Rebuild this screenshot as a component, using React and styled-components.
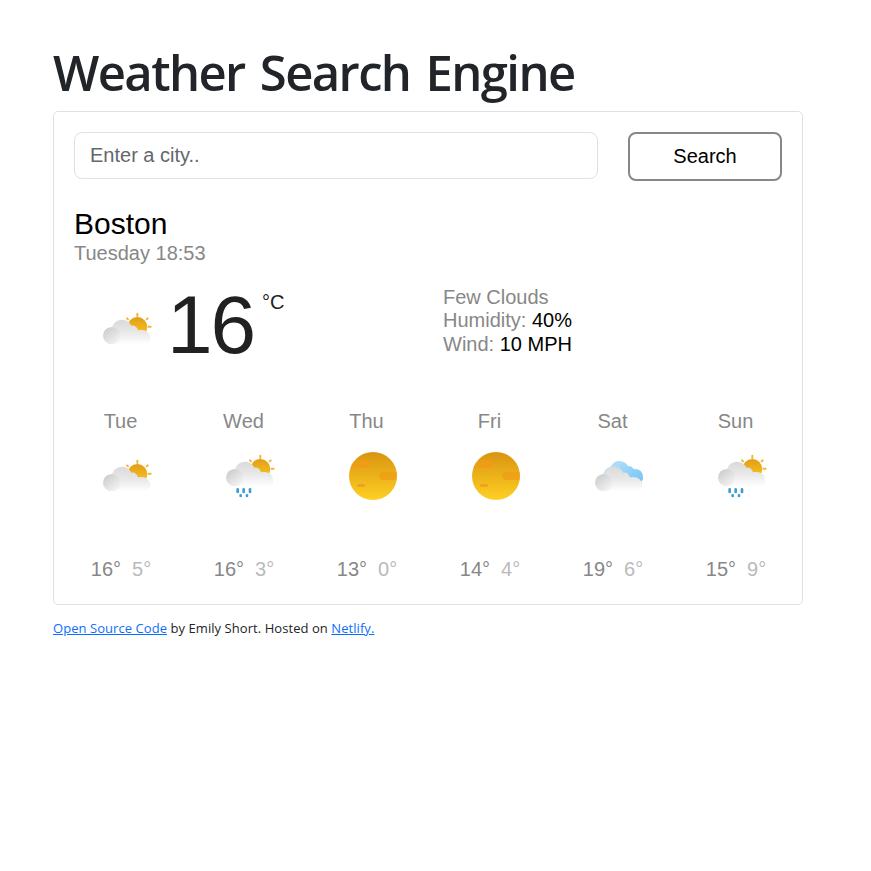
import React from "react";
import styled, { createGlobalStyle } from "styled-components";

const GlobalStyle = createGlobalStyle`
  *, *::before, *::after { box-sizing: border-box; }
  body {
    margin: 0;
    background: #fff;
    color: #212529;
    font-family: "Open Sans", "Noto Sans", sans-serif;
  }
`;

const Page = styled.main`
  width: 750px;
  margin: 43px 0 0 53px;
`;

const Title = styled.h1`
  margin: 0 0 8px;
  height: 60px;
  font-size: 49px;
  font-weight: 560;
  line-height: 59px;
  letter-spacing: -1.6px;
  word-spacing: 4px;
  white-space: nowrap;
`;

const Card = styled.section`
  height: 494px;
  padding: 20px;
  border: 1px solid #dee2e6;
  border-radius: 5px;
  font-family: "Liberation Sans", Arial, sans-serif;
  font-size: 20px;
  line-height: 23.5px;
  color: #878787;
`;

const SearchForm = styled.form`
  display: grid;
  grid-template-columns: 524px 154px;
  justify-content: space-between;
  align-items: start;
`;

const CityInput = styled.input`
  height: 47px;
  padding: 0 15px 1px;
  border: 1px solid #dee2e6;
  border-radius: 8px;
  background: #fff;
  font: inherit;
  outline: none;
  &::placeholder { color: #62676b; opacity: 1; }
`;

const SearchButton = styled.button`
  height: 49px;
  padding: 0;
  border: 2px solid #878787;
  border-radius: 8px;
  background: #fff;
  color: #000;
  font: inherit;
`;

const City = styled.h2`
  margin: 25px 0 0;
  font-size: 30px;
  font-weight: 400;
  line-height: 35px;
  color: #000;
`;

const Updated = styled.div`
  margin-top: 1px;
`;

const Current = styled.div`
  display: grid;
  grid-template-columns: 369px 1fr;
  height: 106px;
  margin-top: 10px;
`;

const Reading = styled.div`
  display: flex;
  color: #212121;
`;

const Temperature = styled.span`
  width: 95px;
  margin-left: -13px;
  font-size: 82px;
  line-height: 97px;
  letter-spacing: -2px;
`;

const Unit = styled.span`
  margin-top: 15px;
`;

const Details = styled.ul`
  margin: 10px 0 0;
  padding: 0;
  list-style: none;
`;

const Value = styled.span`
  color: #000;
`;

const Forecast = styled.div`
  display: grid;
  grid-template-columns: repeat(6, 93px);
  column-gap: 30px;
  margin-top: 28px;
`;

const Day = styled.div`
  text-align: center;
`;

const DayName = styled.div`
  height: 13px;
`;

const Temps = styled.div`
  display: flex;
  justify-content: center;
  gap: 11px;
  margin-top: 29px;
  padding-left: 1px;
`;

const Low = styled.span`
  color: #bababa;
`;

const Icon = styled.svg`
  display: block;
  flex: none;
  width: 106px;
  height: 106px;
`;

const Paints = styled.svg`
  display: block;
  width: 0;
  height: 0;
`;

const Footer = styled.footer`
  margin-top: 13px;
  font-size: 13px;
  line-height: 20px;
  letter-spacing: 0.06px;
  white-space: nowrap;
`;

const Link = styled.a`
  color: #0d6efd;
  text-decoration: underline;
`;

function SunPeek() {
  return (
    <g>
      <circle cx="190" cy="153" r="30" fill="url(#sun)" />
      <path
        d="M190 113v7M159 127l3 3M221 127l-3 3M224 152h6"
        stroke="#f2b632"
        strokeWidth="6"
        strokeLinecap="round"
      />
    </g>
  );
}

function Cloud() {
  return (
    <g>
      <path
        d="M113 205V162A31 31 0 0 1 172 149Q187 147 192 163Q211 159 221 169Q229 176 229 189Q228 204 214 205Z"
        fill="url(#cloud)"
      />
      <circle cx="113" cy="179" r="26" fill="url(#puff)" />
    </g>
  );
}

function WeatherIcon({ kind }) {
  if (kind === "clear") {
    return (
      <Icon viewBox="0 0 318 318">
        <circle cx="159" cy="159" r="72" fill="url(#fullSun)" />
        <path
          d="M106 111H138Q150 111 150 123T138 135H91Q95 121 106 111Z"
          fill="url(#patchLeft)"
        />
        <path
          d="M190 147H230Q232 159 229 171H190Q178 171 178 159T190 147Z"
          fill="url(#patchRight)"
        />
        <rect x="111" y="183" width="24" height="9" rx="4" fill="#f0991a" opacity=".75" />
      </Icon>
    );
  }
  if (kind === "cloudy") {
    return (
      <Icon viewBox="0 0 318 318">
        <path
          d="M111 162Q112 137 134 131Q144 113 160 114Q179 115 186 130Q196 127 203 138Q231 136 231 164Q231 173 225 177H130Z"
          fill="url(#blue)"
        />
        <Cloud />
      </Icon>
    );
  }
  return (
    <Icon viewBox="0 0 318 318">
      <g transform={kind === "rain" ? "translate(0 -15)" : undefined}>
        <SunPeek />
        <Cloud />
      </g>
      {kind === "rain" && (
        <path
          d="M122 199v8M140 199v8M159 199v8M131 217v2M150 217v2"
          stroke="#3e9dd2"
          strokeWidth="8"
          strokeLinecap="round"
        />
      )}
    </Icon>
  );
}

function IconPaints() {
  return (
    <Paints>
      <defs>
        <linearGradient id="sun" x1="0" y1="0" x2="0" y2="1">
          <stop stopColor="#e19d18" />
          <stop offset="1" stopColor="#fac922" />
        </linearGradient>
        <linearGradient id="fullSun" x1="0" y1="0" x2="0" y2="1">
          <stop stopColor="#d99411" />
          <stop offset="1" stopColor="#ffd024" />
        </linearGradient>
        <linearGradient id="patchLeft">
          <stop stopColor="#f39a17" stopOpacity=".4" />
          <stop offset="1" stopColor="#f39a17" />
        </linearGradient>
        <linearGradient id="patchRight">
          <stop stopColor="#f09a17" stopOpacity=".7" />
          <stop offset="1" stopColor="#f09a17" stopOpacity=".6" />
        </linearGradient>
        <linearGradient id="cloud" x1="0" y1="0" x2="0" y2="1">
          <stop stopColor="#dadada" />
          <stop offset=".5" stopColor="#e8e8e8" />
          <stop offset="1" stopColor="#fff" />
        </linearGradient>
        <linearGradient id="puff" x1="0" y1=".15" x2=".65" y2="1">
          <stop stopColor="#cbcbcb" />
          <stop offset="1" stopColor="#f2f2f2" />
        </linearGradient>
        <linearGradient id="blue" x1="0" y1="0" x2="1" y2="1">
          <stop stopColor="#bfe4fb" />
          <stop offset="1" stopColor="#72c3f5" />
        </linearGradient>
      </defs>
    </Paints>
  );
}

const days = [
  { name: "Tue", kind: "partly", high: 16, low: 5 },
  { name: "Wed", kind: "rain", high: 16, low: 3 },
  { name: "Thu", kind: "clear", high: 13, low: 0 },
  { name: "Fri", kind: "clear", high: 14, low: 4 },
  { name: "Sat", kind: "cloudy", high: 19, low: 6 },
  { name: "Sun", kind: "rain", high: 15, low: 9 },
];

export default function App() {
  return (
    <>
      <GlobalStyle />
      <Page>
        <Title>Weather Search Engine</Title>
        <Card>
          <SearchForm onSubmit={(e) => e.preventDefault()}>
            <CityInput placeholder="Enter a city.." />
            <SearchButton type="submit">Search</SearchButton>
          </SearchForm>
          <City>Boston</City>
          <Updated>Tuesday 18:53</Updated>
          <Current>
            <Reading>
              <WeatherIcon kind="partly" />
              <Temperature>16</Temperature>
              <Unit>°C</Unit>
            </Reading>
            <Details>
              <li>Few Clouds</li>
              <li>Humidity: <Value>40%</Value></li>
              <li>Wind: <Value>10 MPH</Value></li>
            </Details>
          </Current>
          <Forecast>
            {days.map((day) => (
              <Day key={day.name}>
                <DayName>{day.name}</DayName>
                <WeatherIcon kind={day.kind} />
                <Temps>
                  <span>{day.high}°</span>
                  <Low>{day.low}°</Low>
                </Temps>
              </Day>
            ))}
          </Forecast>
        </Card>
        <Footer>
          <Link href="#">Open Source Code</Link> by Emily Short. Hosted on{" "}
          <Link href="#">Netlify.</Link>
        </Footer>
      </Page>
      <IconPaints />
    </>
  );
}
